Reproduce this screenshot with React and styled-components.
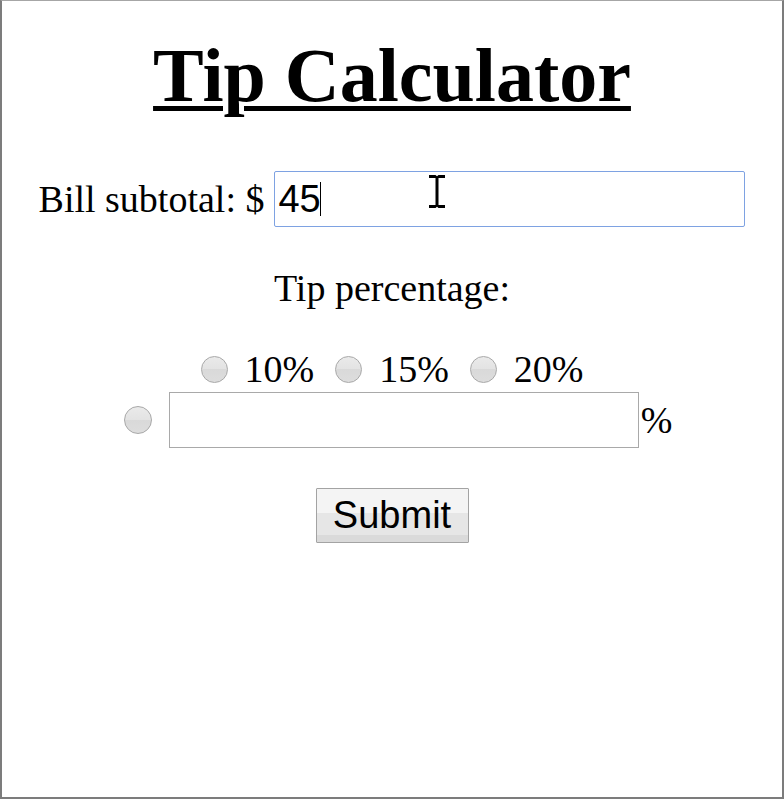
import React from 'react';
import styled, { createGlobalStyle } from 'styled-components';

const GlobalStyle = createGlobalStyle`
  html, body {
    margin: 0;
    padding: 0;
    background: #ffffff;
  }
  body {
    font-family: "Liberation Serif", "Times New Roman", serif;
    color: #000;
  }
`;

const Frame = styled.div`
  width: 784px;
  height: 799px;
  box-sizing: border-box;
  border-top: 1px solid #a6a6a6;
  border-left: 2px solid #7c7c7c;
  border-right: 2px solid #7c7c7c;
  border-bottom: 2px solid #7c7c7c;
  display: flex;
  flex-direction: column;
  align-items: center;
`;

const Title = styled.h1`
  margin: 30px 0 0;
  font-size: 76px;
  line-height: 88px;
  font-weight: bold;
  text-decoration: underline;
  text-decoration-thickness: 5px;
  text-underline-offset: 5px;
`;

const Row = styled.div`
  display: flex;
  align-items: center;
  justify-content: center;
  margin-top: ${props => props.top}px;
  padding-left: ${props => props.shift || 0}px;
  font-size: 38px;
  line-height: 42px;
`;

const Label = styled.span`
  margin-left: ${props => props.lead || 0}px;
  margin-right: ${props => props.gap || 0}px;
  white-space: nowrap;
`;

const FieldWrap = styled.div`
  position: relative;
`;

const TextInput = styled.input`
  box-sizing: border-box;
  width: ${props => props.width}px;
  height: 56px;
  margin: 0;
  padding: 0 3px;
  font-family: "Liberation Sans", Arial, sans-serif;
  font-size: 38px;
  color: #000;
  background: #fff;
  border: 1px solid ${props => (props.active ? '#7ea2e2' : '#a9a9a9')};
  border-radius: ${props => (props.active ? 2 : 0)}px;
  outline: none;
`;

const Caret = styled.span`
  position: absolute;
  left: 46px;
  top: 11px;
  width: 1px;
  height: 34px;
  background: #000;
`;

const Pointer = styled.svg`
  position: absolute;
  left: 155px;
  top: 3px;
`;

const Heading = styled.div`
  margin-top: 40px;
  font-size: 38px;
  line-height: 42px;
`;

const Radio = styled.input.attrs({ type: 'radio' })`
  appearance: none;
  box-sizing: border-box;
  width: ${props => props.size || 27}px;
  height: ${props => props.size || 27}px;
  margin: 0 ${props => props.gap || 17}px 0 0;
  border-radius: 50%;
  border: 1px solid #a8a8a8;
  background: linear-gradient(#eaeaea 0%, #e3e3e3 50%, #d9d9d9 50%, #dddddd 100%);
  flex-shrink: 0;
`;

const SubmitButton = styled.button`
  box-sizing: border-box;
  width: 153px;
  height: 55px;
  margin-top: 40px;
  padding: 0;
  font-family: "Liberation Sans", Arial, sans-serif;
  font-size: 38px;
  color: #000;
  border: 1px solid #a3a3a3;
  border-radius: 1px;
  background: linear-gradient(#f4f4f4 0%, #f4f4f4 45%, #e6e6e6 45%, #e6e6e6 86%, #dadada 86%);
`;

const presets = ['10%', '15%', '20%'];

const App = () => {
  return (
    <>
      <GlobalStyle />
      <Frame>
        <Title>Tip Calculator</Title>

        <Row top={52}>
          <Label gap={10}>Bill subtotal: $</Label>
          <FieldWrap>
            <TextInput width={471} active defaultValue="45" />
            <Caret />
            <Pointer width="17" height="36" viewBox="0 0 17 36">
              <path
                d="M0 1h6.5l1.5 1.2 1.5-1.2H16v3h-6.5v27H16v3H9.5L8 32.8 6.5 34H0v-3h6.5V4H0z"
                fill="#000"
              />
            </Pointer>
          </FieldWrap>
        </Row>

        <Heading>Tip percentage:</Heading>

        <Row top={39}>
          {presets.map((p, i) => (
            <React.Fragment key={p}>
              <Radio name="tip" />
              <Label gap={i < presets.length - 1 ? 21 : 0}>{p}</Label>
            </React.Fragment>
          ))}
        </Row>

        <Row top={2} shift={12}>
          <Radio name="tip" size={28} />
          <TextInput width={470} />
          <Label lead={2}>%</Label>
        </Row>

        <SubmitButton>Submit</SubmitButton>
      </Frame>
    </>
  );
};

export default App;
